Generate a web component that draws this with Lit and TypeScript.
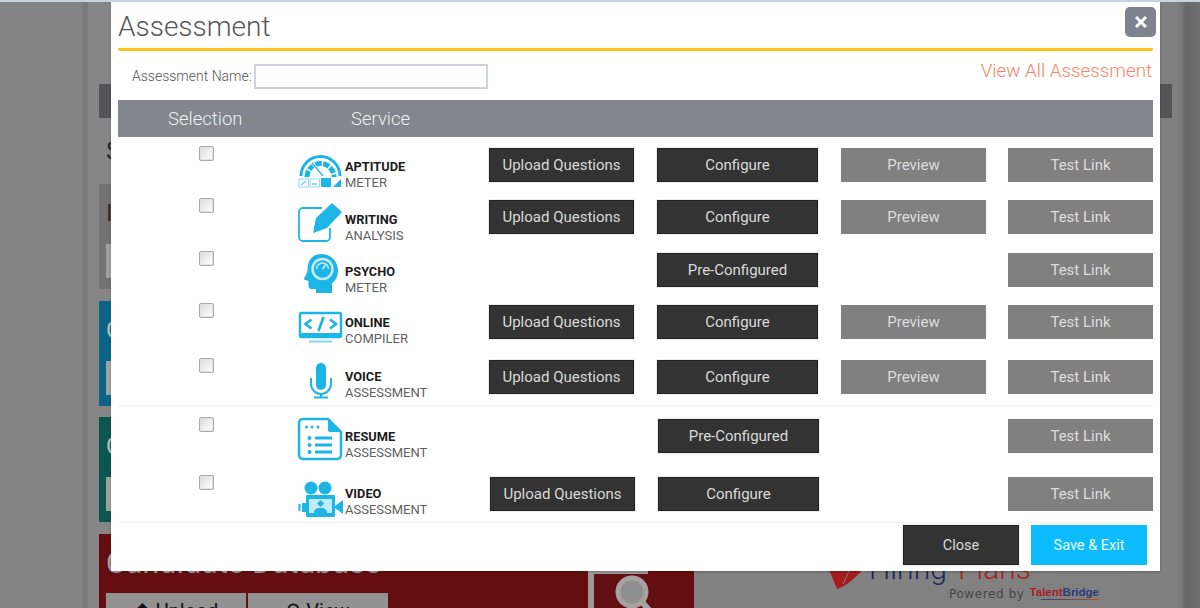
import { LitElement, html, css, svg } from "lit";
import { customElement } from "lit/decorators.js";

const C = "#1db4e6";

const icons: Record<string, unknown> = {
  aptitude: svg`
    <path d="M4 30a19.5 19.5 0 0 1 39 0" fill="none" stroke="${C}" stroke-width="3"/>
    <path d="M10 31a13.500 13.500 0 0 1 27 0" fill="none" stroke="${C}" stroke-width="5" stroke-dasharray="6.500 1.400"/>
    <path d="M14 16l13 15" stroke="#fff" stroke-width="2.5"/>
    <path d="M15 17l11 13" stroke="${C}" stroke-width="1.3"/>
    <rect x="2" y="32" width="44" height="2" fill="#fff"/>
    <g fill="none" stroke="#8fd8f2" stroke-width="1"><rect x="2" y="33" width="9.5" height="8"/><rect x="13" y="33" width="9.5" height="8"/></g>
    <rect x="24" y="32" width="10" height="9" fill="${C}"/>
    <path d="M36 41l8-8v8z" fill="${C}"/>
    <path d="M4 39l5-4M15 38h5" stroke="#6ccbec" stroke-width="1.3"/>`,
  writing: svg`
    <path d="M33 30v9a4 4 0 0 1-4 4H6a4 4 0 0 1-4-4V14a4 4 0 0 1 4-4h19" fill="none" stroke="${C}" stroke-width="1.800"/>
    <path d="M16 35l3-15L35 5l10 9-15 16z" fill="${C}"/>`,
  psycho: svg`
    <path d="M24 3c10 0 17 7.500 17 16.500 0 7-3.500 10.500-6 13V42H19v-4h-5c-2 0-2.500-2-2.500-4v-4L7 28.500c-.5-1 3.500-6 3.500-9.500C10.500 10 15 3 24 3z" fill="${C}"/>
    <circle cx="25.500" cy="18" r="10" fill="none" stroke="#c6ecf9" stroke-width="2.500"/>
    <path d="M19.500 18a6 6 0 0 1 12 0" fill="none" stroke="#c6ecf9" stroke-width="1.500"/>
    <path d="M25.500 18l3-4" stroke="#c6ecf9" stroke-width="1.500"/>`,
  online: svg`
    <rect x="3" y="10" width="41" height="24" rx="1.500" fill="none" stroke="${C}" stroke-width="2.500"/>
    <rect x="3" y="30" width="41" height="5" fill="${C}"/>
    <rect x="12" y="37.500" width="23" height="2" fill="#7fd3f0"/>
    <path d="M14.500 16.500l-6 4.500 6 4.500M33 16.500l6 4.500-6 4.500M26.500 14l-5 14" fill="none" stroke="${C}" stroke-width="2.700"/>`,
  voice: svg`
    <rect x="19" y="5" width="10" height="27" rx="5" fill="${C}"/>
    <path d="M14 20v6a10 10 0 0 0 20 0v-6" fill="none" stroke="${C}" stroke-width="2"/>
    <path d="M24 36v3M17 39.500h14" stroke="${C}" stroke-width="2"/>`,
  resume: svg`
    <path d="M6 2h25l13 13v23a4 4 0 0 1-4 4H6a4 4 0 0 1-4-4V6a4 4 0 0 1 4-4z" fill="none" stroke="${C}" stroke-width="2.500"/>
    <path d="M31 2l13 13H33a2 2 0 0 1-2-2z" fill="${C}"/>
    <g fill="${C}"><circle cx="9.500" cy="10" r="1.500"/><circle cx="15" cy="10" r="1.500"/><circle cx="21" cy="10" r="1.500"/>
    <circle cx="12.500" cy="21" r="2"/><circle cx="12.500" cy="28" r="2"/><circle cx="12.500" cy="35" r="2"/>
    <rect x="18" y="19.500" width="17" height="3"/><rect x="18" y="26.500" width="17" height="3"/><rect x="18" y="33.500" width="17" height="3"/></g>`,
  video: svg`
    <circle cx="14" cy="13" r="6.500" fill="${C}"/><circle cx="28" cy="13" r="6.500" fill="${C}"/>
    <rect x="9" y="20" width="29" height="22" rx="1" fill="${C}"/>
    <rect x="12" y="24" width="23" height="14" fill="#bfeaf8"/>
    <path d="M23.500 25l3.500 3.500-3.500 3.500-3.500-3.500z" fill="${C}"/>
    <path d="M17 38c0-4 3-5 6.500-5s6.500 1 6.500 5z" fill="${C}"/>
    <path d="M38 31l8-6v14l-8-6zM5 28h4v9H5z" fill="${C}"/>
    <rect x="1.500" y="29" width="2" height="7" fill="${C}"/>`,
};

type Row = {
  id: string; name: string; sub: string; h: number; textTop: number;
  upload: boolean; config: string; preview: boolean; nudge?: boolean; sep?: boolean;
};

const rows: Row[] = [
  { id: "aptitude", name: "APTITUDE", sub: "METER", h: 52, textTop: 13, upload: true, config: "Configure", preview: true },
  { id: "writing", name: "WRITING", sub: "ANALYSIS", h: 53, textTop: 14, upload: true, config: "Configure", preview: true },
  { id: "psycho", name: "PSYCHO", sub: "METER", h: 52, textTop: 13, upload: false, config: "Pre-Configured", preview: false },
  { id: "online", name: "ONLINE", sub: "COMPILER", h: 55, textTop: 12, upload: true, config: "Configure", preview: true },
  { id: "voice", name: "VOICE", sub: "ASSESSMENT", h: 48, textTop: 11, upload: true, config: "Configure", preview: true, sep: true },
  { id: "resume", name: "RESUME", sub: "ASSESSMENT", h: 58, textTop: 12, upload: false, config: "Pre-Configured", preview: false, nudge: true },
  { id: "video", name: "VIDEO", sub: "ASSESSMENT", h: 48, textTop: 11, upload: true, config: "Configure", preview: false, nudge: true, sep: true },
];

@customElement("app-root")
export class AppRoot extends LitElement {
  static styles = css`
    :host {
      display: block; position: relative; width: 1200px; height: 608px; overflow: hidden;
      font-family: Roboto, "Liberation Sans", sans-serif;
      background: linear-gradient(90deg, #858585 0, #858585 80px, #767676 87px, #868686 88px, #808080 1175px, #767676 1182px, #686868 1186px, #6e6e6e 1200px);
    }
    * { box-sizing: border-box; }
    .strip { height: 2px; background: #c6d4e4; }
    .page { margin-left: 99px; padding-top: 82px; display: flex; flex-direction: column; }
    .topbar { width: 1073px; height: 34px; background: #545457; }
    .heading { height: 66px; padding: 18px 7px 0; font-size: 26px; line-height: 30px; color: #222a38; }
    .panel { width: 595px; height: 105px; margin-bottom: 12px; padding: 16px 7px; color: #b5c0c4; }
    .panel .t { font-size: 24px; line-height: 26px; height: 26px; }
    .panel .box { width: 120px; height: 34px; margin-top: 18px; background: #a0a0a0; }
    .grey { background: #737373; color: #3a2a22; }
    .blue { background: #0c6484; margin-bottom: 11px; }
    .teal { background: #0b5750; }
    .lower { display: flex; height: 74px; }
    .red { width: 595px; background: #650e11; padding: 14px 7px 0; display: flex; justify-content: space-between; color: #a9a0a0; }
    .red h2 { margin: 0; font-size: 30px; font-weight: 400; line-height: 30px; letter-spacing: .3px; white-space: nowrap; }
    .red .btns { display: flex; gap: 2px; margin-top: 15px; }
    .red .btns span { width: 140px; height: 40px; padding-top: 6px; background: #929292; color: #111; font-size: 20px; text-align: center; line-height: 24px; }
    .mag { align-self: flex-start; margin-right: 15px; margin-top: 23px; }
    .logo { margin-left: 134px; padding-top: 20px; width: 340px; }
    .logoLine { display: flex; align-items: flex-start; height: 36px; font-size: 30px; line-height: 30px; font-weight: 300; gap: 3px; }
    .hiring { color: #22265c; }
    .plans { color: #a81f22; margin-left: 8px; }
    .powered { display: flex; align-items: center; gap: 5px; margin-left: 121px; margin-top: -3px; font-size: 12px; letter-spacing: .6px; color: #454545; font-family: "DejaVu Sans", sans-serif; white-space: nowrap; }
    .tb { font-family: "Liberation Sans", sans-serif; font-weight: 700; font-size: 11.500px; letter-spacing: 0; line-height: 12px; color: #a51e28; margin-top: -3px; }
    .tb b { color: #2c3a78; }
    .tb::after { content: ""; display: block; width: 58px; height: 1px; margin: 1px 0 0 11px; background: linear-gradient(90deg, #39408a, #b0502c); }
    .modal {
      position: absolute; left: 111px; top: 2px; width: 1049px; height: 569px; background: #fff;
      padding: 0 7px; display: flex; flex-direction: column;
      box-shadow: 0 1px 2px rgba(0,0,0,.25);
    }
    .title { height: 49px; border-bottom: 3px solid #fcc419; font-size: 28px; font-weight: 300; line-height: 50px; color: #565656; border-radius: 0 0 2px 2px; }
    .x { position: absolute; right: 4px; top: 5px; width: 31px; height: 30px; border-radius: 5px; background: #7e838f; display: flex; align-items: center; justify-content: center; }
    .nameRow { height: 24px; margin-top: 13px; display: flex; align-items: center; padding-left: 14px; }
    .nameRow label { font-size: 14px; font-weight: 300; color: #555; white-space: nowrap; }
    .nameRow .inp { width: 234px; height: 25px; margin-left: 2px; border: 2px solid #cfd1df; background: #fff; }
    .nameRow a { margin-left: auto; margin-top: -11px; margin-right: 1px; font-size: 18.800px; font-weight: 300; color: #f98468; }
    .thead { height: 37px; margin-top: 12px; margin-bottom: 9px; background: #83868f; display: flex; align-items: center; color: #eef0f2; font-size: 18.500px; font-weight: 300; }
    .thead .a { margin-left: 50px; width: 183px; }
    .row { display: grid; grid-template-columns: 180px 191px 168px 184px 167px 145px; align-items: start; }
    .row.sep { border-bottom: 1px solid #f1f1f1; }
    .row.gap { margin-bottom: 11px; }
    .cb { margin-left: 81px; width: 15px; height: 15px; border: 1px solid #aaa; border-radius: 2px; background: linear-gradient(135deg, #d8d8d8, #f6f6f6 70%); box-shadow: inset 0 0 0 1px #e3e3e3; }
    .svc { display: flex; height: 48px; margin-left: -1px; white-space: nowrap; }
    .svc svg { flex: none; overflow: visible; }
    .svc .nm { font-size: 12.800px; font-weight: 700; color: #1c1c1c; line-height: 16px; }
    .svc .sb { font-size: 13px; font-weight: 400; color: #5f5f5f; line-height: 16px; }
    .btn { display: flex; align-items: center; justify-content: center; height: 34px; margin-top: 2px; font-size: 15px; white-space: nowrap; }
    .dark { background: #333; color: #d9d9d9; border: 1px solid #222; box-shadow: 0 0 1px #999; }
    .gray { background: #808080; color: #ddd; }
    .up { width: 145px; }
    .cfg { width: 161px; }
    .pv { width: 145px; }
    .tl { width: 145px; }
    .nudge { margin-left: 1px; }
    .foot { display: flex; justify-content: flex-end; gap: 12px; padding: 2px 6px 0 0; }
    .foot .btn { width: 116px; height: 40px; margin: 0; font-size: 14.500px; }
    .save { background: #0dbcfc; color: #e8f8ff; }
  `;

  render() {
    return html`
      <div class="strip"></div>
      <div class="page">
        <div class="topbar"></div>
        <div class="heading">S</div>
        <div class="panel grey"><div class="t">I</div><div class="box"></div></div>
        <div class="panel blue"><div class="t">C</div><div class="box"></div></div>
        <div class="panel teal"><div class="t">C</div><div class="box"></div></div>
        <div class="lower">
          <div class="red">
            <div>
              <h2>Candidate Database</h2>
              <div class="btns"><span>⬆ Upload</span><span>⚲ View</span></div>
            </div>
            <svg class="mag" width="84" height="37" viewBox="0 0 84 37">
              <path d="M0 0h6v37H0zM0 0h60v3H0z" fill="#9a9a9a"/>
              <circle cx="44" cy="21" r="14" fill="#8f8f8f" stroke="#a3a3a3" stroke-width="5"/>
              <path d="M54 31l14 16" stroke="#a3a3a3" stroke-width="6"/>
            </svg>
          </div>
          <div class="logo">
            <div class="logoLine">
              <svg width="38" height="36" viewBox="0 0 38 36"><path d="M-2 8L9 35C22 30 32 20 40 8z" fill="#a51c1f"/><path d="M21 17l-6 13" stroke="#808080" stroke-width="1"/></svg>
              <span class="hiring">Hiring</span><span class="plans">Plans</span>
            </div>
            <div class="powered">Powered by <span class="tb">Talent<b>Bridge</b></span></div>
          </div>
        </div>
      </div>

      <div class="modal">
        <div class="title">Assessment</div>
        <div class="x">
          <svg width="14" height="14" viewBox="0 0 14 14"><path d="M2 2l10 10M12 2L2 12" stroke="#fff" stroke-width="3"/></svg>
        </div>
        <div class="nameRow">
          <label>Assessment Name:</label><div class="inp"></div>
          <a>View All Assessment</a>
        </div>
        <div class="thead"><span class="a">Selection</span><span>Service</span></div>
        ${rows.map((r) => html`
          <div class="row ${r.sep ? "sep" : ""} ${r.id === "voice" ? "gap" : ""}" style="height:${r.h}px">
            <div class="cb"></div>
            <div class="svc">
              <svg width="48" height="48" viewBox="0 0 48 48">${icons[r.id]}</svg>
              <div style="padding-top:${r.textTop}px">
                <div class="nm">${r.name}</div>
                <div class="sb">${r.sub}</div>
              </div>
            </div>
            <div>${r.upload ? html`<div class="btn dark up ${r.nudge ? "nudge" : ""}">Upload Questions</div>` : ""}</div>
            <div><div class="btn dark cfg ${r.nudge ? "nudge" : ""}">${r.config}</div></div>
            <div>${r.preview ? html`<div class="btn gray pv">Preview</div>` : ""}</div>
            <div><div class="btn gray tl">Test Link</div></div>
          </div>
        `)}
        <div class="foot">
          <div class="btn dark">Close</div>
          <div class="btn save">Save &amp; Exit</div>
        </div>
      </div>
    `;
  }
}
